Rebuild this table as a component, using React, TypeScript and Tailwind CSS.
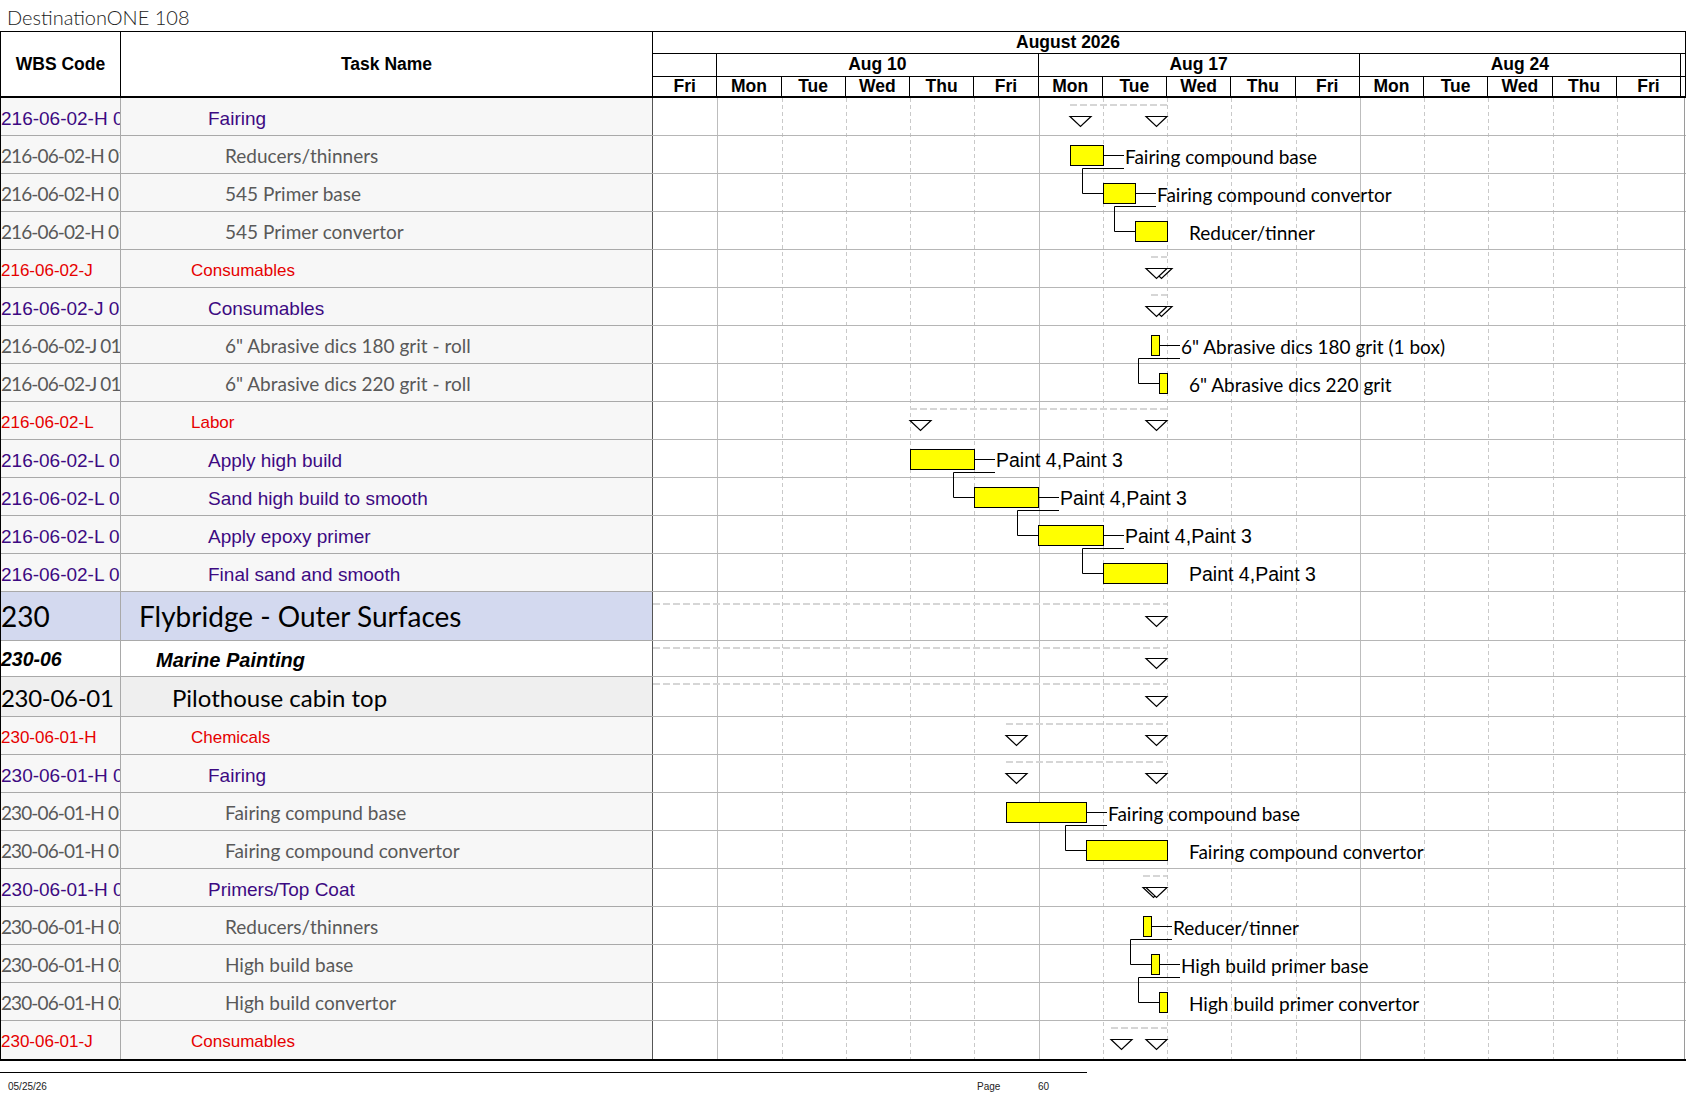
import React from "react";

type Kind = "l0" | "l1" | "l2" | "red" | "purple" | "detail";

type Row = { code: string; name: string; kind: Kind; h: number };

const rows: Row[] = [
  { code: "216-06-02-H 01", name: "Fairing", kind: "purple", h: 38 },
  { code: "216-06-02-H 0101", name: "Reducers/thinners", kind: "detail", h: 38 },
  { code: "216-06-02-H 0102", name: "545 Primer base", kind: "detail", h: 38 },
  { code: "216-06-02-H 0103", name: "545 Primer convertor", kind: "detail", h: 38 },
  { code: "216-06-02-J", name: "Consumables", kind: "red", h: 38 },
  { code: "216-06-02-J 01", name: "Consumables", kind: "purple", h: 38 },
  { code: "216-06-02-J 0101", name: '6" Abrasive dics 180 grit - roll', kind: "detail", h: 38 },
  { code: "216-06-02-J 0102", name: '6" Abrasive dics 220 grit - roll', kind: "detail", h: 38 },
  { code: "216-06-02-L", name: "Labor", kind: "red", h: 38 },
  { code: "216-06-02-L 01", name: "Apply high build", kind: "purple", h: 38 },
  { code: "216-06-02-L 02", name: "Sand high build to smooth", kind: "purple", h: 38 },
  { code: "216-06-02-L 03", name: "Apply epoxy primer", kind: "purple", h: 38 },
  { code: "216-06-02-L 04", name: "Final sand and smooth", kind: "purple", h: 38 },
  { code: "230", name: "Flybridge - Outer Surfaces", kind: "l0", h: 49 },
  { code: "230-06", name: "Marine Painting", kind: "l1", h: 36 },
  { code: "230-06-01", name: "Pilothouse cabin top", kind: "l2", h: 40 },
  { code: "230-06-01-H", name: "Chemicals", kind: "red", h: 38 },
  { code: "230-06-01-H 01", name: "Fairing", kind: "purple", h: 38 },
  { code: "230-06-01-H 0101", name: "Fairing compund base", kind: "detail", h: 38 },
  { code: "230-06-01-H 0102", name: "Fairing compound convertor", kind: "detail", h: 38 },
  { code: "230-06-01-H 02", name: "Primers/Top Coat", kind: "purple", h: 38 },
  { code: "230-06-01-H 0201", name: "Reducers/thinners", kind: "detail", h: 38 },
  { code: "230-06-01-H 0202", name: "High build base", kind: "detail", h: 38 },
  { code: "230-06-01-H 0203", name: "High build convertor", kind: "detail", h: 38 },
  { code: "230-06-01-J", name: "Consumables", kind: "red", h: 38 },
];

// gantt items, x in page pixels
type Item = { sum?: [number, number]; noStart?: boolean; bar?: [number, number]; label?: string; conn?: boolean; arial?: boolean };

const items: Record<number, Item> = {
  0: { sum: [1070, 1167] },
  1: { bar: [1070, 1103], label: "Fairing compound base", conn: true },
  2: { bar: [1103, 1135], label: "Fairing compound convertor", conn: true },
  3: { bar: [1135, 1167], label: "Reducer/tinner" },
  4: { sum: [1151, 1167] },
  5: { sum: [1151, 1167] },
  6: { bar: [1151, 1159], label: '6" Abrasive dics 180 grit (1 box)', conn: true },
  7: { bar: [1159, 1167], label: '6" Abrasive dics 220 grit' },
  8: { sum: [910, 1167] },
  9: { bar: [910, 974], label: "Paint 4,Paint 3", conn: true, arial: true },
  10: { bar: [974, 1038], label: "Paint 4,Paint 3", conn: true, arial: true },
  11: { bar: [1038, 1103], label: "Paint 4,Paint 3", conn: true, arial: true },
  12: { bar: [1103, 1167], label: "Paint 4,Paint 3", arial: true },
  13: { sum: [653, 1167], noStart: true },
  14: { sum: [653, 1167], noStart: true },
  15: { sum: [653, 1167], noStart: true },
  16: { sum: [1006, 1167] },
  17: { sum: [1006, 1167] },
  18: { bar: [1006, 1086], label: "Fairing compound base", conn: true },
  19: { bar: [1086, 1167], label: "Fairing compound convertor" },
  20: { sum: [1143, 1167] },
  21: { bar: [1143, 1151], label: "Reducer/tinner", conn: true },
  22: { bar: [1151, 1159], label: "High build primer base", conn: true },
  23: { bar: [1159, 1167], label: "High build primer convertor" },
  24: { sum: [1111, 1167] },
};

const deps: [number, number][] = [
  [1, 2], [2, 3], [6, 7], [9, 10], [10, 11], [11, 12], [18, 19], [21, 22], [22, 23],
];

const X0 = 653;
const DAY = 64.25;
const GW = 1033;

const tops: number[] = [];
rows.reduce((y, r) => {
  tops.push(y);
  return y + r.h;
}, 0);
const BODY_H = rows.reduce((s, r) => s + r.h, 0);

const rowBg: Record<Kind, string> = {
  l0: "bg-[#d3d9ef]",
  l1: "bg-white",
  l2: "bg-[#efefef]",
  red: "bg-[#f7f7f7]",
  purple: "bg-[#f7f7f7]",
  detail: "bg-[#f7f7f7]",
};

const codeCls: Record<Kind, string> = {
  l0: "font-[Lato,sans-serif] text-[28px] text-black",
  l1: "pt-[2px] font-['Liberation_Sans',Arial,sans-serif] text-[19.5px] font-bold italic text-black",
  l2: "pt-[2px] font-[Lato,sans-serif] text-[24px] tracking-[-0.3px] text-black",
  red: "pt-[3px] font-['Liberation_Sans',Arial,sans-serif] text-[17px] text-[#e60000]",
  purple: "pt-[3px] font-['Liberation_Sans',Arial,sans-serif] text-[19px] text-[#3d0a82]",
  detail: "pt-[2px] font-[Lato,sans-serif] text-[19px] tracking-[-0.9px] text-[#595959]",
};

const nameCls: Record<Kind, string> = {
  l0: "pl-[18px] font-[Lato,sans-serif] text-[28px] text-black",
  l1: "pt-[2px] pl-[35px] font-['Liberation_Sans',Arial,sans-serif] text-[20px] font-bold italic text-black",
  l2: "pt-[2px] pl-[51px] font-[Lato,sans-serif] text-[24px] text-black",
  red: "pt-[3px] pl-[70px] font-['Liberation_Sans',Arial,sans-serif] text-[17px] text-[#e60000]",
  purple: "pt-[3px] pl-[87px] font-['Liberation_Sans',Arial,sans-serif] text-[19px] text-[#3d0a82]",
  detail: "pt-[2px] pl-[104px] font-[Lato,sans-serif] text-[19px] text-[#595959]",
};

const days = ["Fri", "Mon", "Tue", "Wed", "Thu", "Fri", "Mon", "Tue", "Wed", "Thu", "Fri", "Mon", "Tue", "Wed", "Thu", "Fri"];

function Tri({ x, y }: { x: number; y: number }) {
  return <polygon points={`${x},${y} ${x + 21},${y} ${x + 10.5},${y + 10}`} fill="white" stroke="black" strokeWidth={1.2} />;
}

function Gantt() {
  const rx = (x: number) => x - X0;
  return (
    <svg width={GW} height={BODY_H} className="block shrink-0">
      {Array.from({ length: 15 }, (_, k) => {
        const i = k + 1;
        const x = Math.round(i * DAY) + 0.5;
        const week = i === 1 || i === 6 || i === 11;
        return (
          <line key={i} x1={x} x2={x} y1={0} y2={BODY_H} stroke={week ? "#bdbdbd" : "#c9c9c9"} strokeWidth={1} strokeDasharray={week ? undefined : "4 3"} />
        );
      })}
      {tops.slice(1).map((t, i) => (
        <line key={i} x1={0} x2={GW} y1={t - 0.5} y2={t - 0.5} stroke="#b6b6b6" strokeWidth={1} />
      ))}
      <line x1={GW - 1.5} x2={GW - 1.5} y1={0} y2={BODY_H} stroke="#9a9a9a" strokeWidth={1} />

      {rows.map((r, i) => {
        const it = items[i];
        if (!it) return null;
        const top = tops[i];
        const mid = top + r.h / 2;
        const out: React.ReactNode[] = [];
        if (it.sum) {
          const [s, e] = it.sum;
          const dy = r.kind === "l0" ? 12 : 7;
          out.push(
            <line key="d" x1={rx(s)} x2={rx(e)} y1={top + dy} y2={top + dy} stroke="#d6d6d6" strokeWidth={2} strokeDasharray="7 3" />
          );
          const ty = Math.round(mid + 4 - 5) + 0.5;
          if (!it.noStart) out.push(<Tri key="a" x={rx(s)} y={ty} />);
          out.push(<Tri key="b" x={rx(e) - 21} y={ty} />);
        }
        if (it.bar) {
          const [s, e] = it.bar;
          const by = Math.round(mid - 10) + 0.5;
          out.push(<rect key="r" x={rx(s) + 0.5} y={by} width={e - s} height={20} fill="#ffff00" stroke="black" strokeWidth={1} />);
          const lx = rx(e) + 21;
          if (it.conn) {
            out.push(<line key="c" x1={rx(e) + 0.5} x2={lx} y1={by + 10} y2={by + 10} stroke="black" strokeWidth={1} />);
          }
          out.push(
            <text
              key="t"
              x={lx + 1}
              y={mid + 1}
              dominantBaseline="central"
              fontFamily={it.arial ? "'Liberation Sans', Arial, sans-serif" : "Lato, sans-serif"}
              fontSize={it.arial ? 19.5 : 19}
              fill="black"
            >
              {it.label}
            </text>
          );
        }
        return <g key={i}>{out}</g>;
      })}

      {deps.map(([a, b]) => {
        const pa = items[a].bar!;
        const pb = items[b].bar!;
        const y1 = tops[a] + rows[a].h - 6 + 0.5;
        const y2 = Math.round(tops[b] + rows[b].h / 2) + 0.5;
        const xs = rx(pa[1]) + 21;
        const xv = Math.round(rx(pb[0]) - 21) + 0.5;
        const xe = rx(pb[0]) + 0.5;
        return <polyline key={`${a}-${b}`} points={`${xs},${y1} ${xv},${y1} ${xv},${y2} ${xe},${y2}`} fill="none" stroke="black" strokeWidth={1} />;
      })}
    </svg>
  );
}

export default function App() {
  const hdr = "font-['Liberation_Sans',Arial,sans-serif] font-bold text-[17.5px] text-black";
  return (
    <div className="w-[1687px] h-[1097px] bg-white overflow-hidden relative">
      <div className="h-[31px] pl-[7px] pt-[2px] font-[Lato,sans-serif] font-light text-[20px] text-[#222]">DestinationONE 108</div>

      {/* header */}
      <div className="flex">
        <div className={`flex w-[653px] h-[67px] border-t border-l border-b-2 border-black ${hdr}`}>
          <div className="w-[120px] border-r border-black flex items-center justify-center">WBS Code</div>
          <div className="w-[532px] border-r border-black flex items-center justify-center">Task Name</div>
        </div>
        <div className={`w-[1033px] h-[67px] border-t border-r border-b-2 border-black flex flex-col ${hdr}`}>
          <div className="h-[22px] border-b border-black flex items-center pl-[363px] leading-none">August 2026</div>
          <div className="h-[23px] border-b border-black flex leading-none">
            <div className="w-[64.25px] border-r border-black"></div>
            {["Aug 10", "Aug 17", "Aug 24"].map((w) => (
              <div key={w} className="w-[321.25px] border-r border-black flex items-center justify-center">
                {w}
              </div>
            ))}
            <div className="flex-1"></div>
          </div>
          <div className="flex-1 flex leading-none">
            {days.map((d, i) => (
              <div key={i} className="w-[64.25px] border-r border-black flex items-center justify-center">
                {d}
              </div>
            ))}
            <div className="flex-1"></div>
          </div>
        </div>
      </div>

      {/* body */}
      <div className="flex w-[1686px] border-b-2 border-black">
        <div className="w-[653px] shrink-0 border-l border-black">
          {rows.map((r, i) => (
            <div
              key={i}
              style={{ height: r.h }}
              className={`flex ${rowBg[r.kind]} ${i < rows.length - 1 ? "border-b border-[#a9a9a9]" : ""}`}
            >
              <div className={`w-[120px] shrink-0 border-r border-[#a9a9a9] overflow-hidden whitespace-nowrap flex items-center leading-none ${codeCls[r.kind]}`}>
                {r.code}
              </div>
              <div className={`w-[532px] shrink-0 border-r border-[#555] overflow-hidden whitespace-nowrap flex items-center leading-none ${nameCls[r.kind]}`}>
                {r.name}
              </div>
            </div>
          ))}
        </div>
        <Gantt />
      </div>

      {/* footer */}
      <div className="w-[1087px] mt-[11px] border-t border-black"></div>
      <div className="flex items-center h-[26px] font-['Liberation_Sans',Arial,sans-serif] text-[10px] text-[#222]">
        <div className="pl-[8px] w-[977px]">05/25/26</div>
        <div className="w-[61px]">Page</div>
        <div>60</div>
      </div>
    </div>
  );
}
